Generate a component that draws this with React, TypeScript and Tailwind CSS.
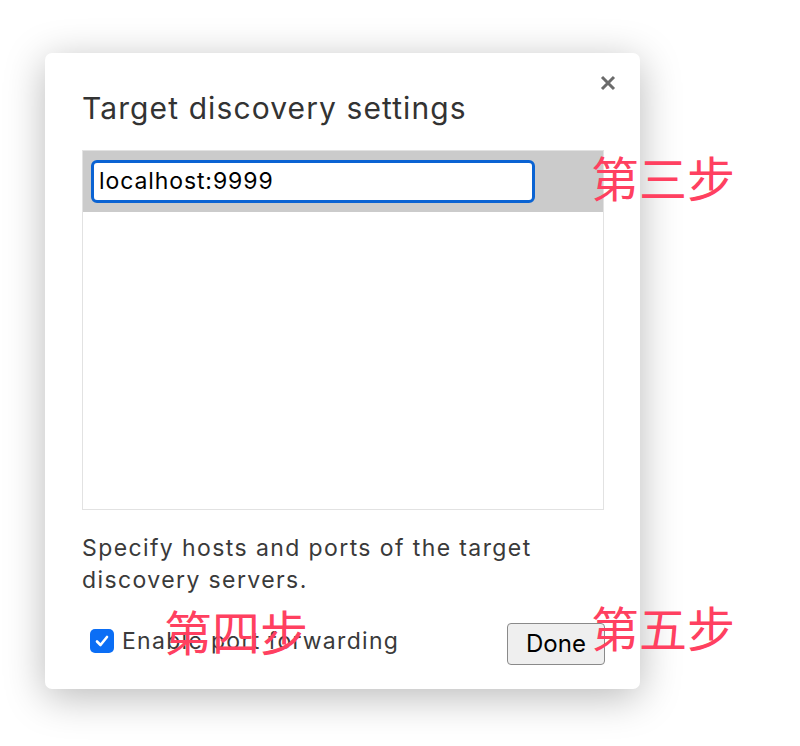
import React from "react";

const App = () => {
  return (
    <div
      className="relative h-[746px] w-[800px] overflow-hidden bg-white"
      style={{ fontFamily: 'Inter, "Liberation Sans", "Noto Sans CJK SC", sans-serif' }}
    >
      <div className="absolute left-[45px] top-[53px] flex h-[636px] w-[595px] flex-col rounded-[7px] bg-white px-[37px] pt-[36px] shadow-[0_8px_40px_rgba(0,0,0,0.28)]">
        <button className="absolute right-[20px] top-[18px] flex h-[24px] w-[24px] items-center justify-center">
          <svg width="16" height="16" viewBox="0 0 16 16">
            <path d="M2 2 L14 14 M14 2 L2 14" stroke="#6b6b6b" strokeWidth="3" strokeLinecap="butt" />
          </svg>
        </button>
        <h2 className="text-[30px] leading-[38px] tracking-[1.1px] text-[#333333]">Target discovery settings</h2>
        <div className="mt-[23px] h-[360px] w-[522px] border border-[#e2e2e2]">
          <div className="flex h-[61px] items-center bg-[#cbcbcb] px-[8px]">
            <div className="flex h-[43px] w-[444px] items-center rounded-[6px] border-[3px] border-[#0a63d3] bg-white px-[5px] text-[23px] tracking-[0.9px] text-black">
              localhost:9999
            </div>
          </div>
        </div>
        <p className="mt-[22px] w-[480px] text-[23px] leading-[32px] tracking-[1.4px] text-[#3a3a3a]">
          Specify hosts and ports of the target discovery servers.
        </p>
        <div className="mt-[21px] flex items-center justify-between">
          <label className="ml-[8px] flex items-center gap-[8px] text-[23px] tracking-[1.3px] text-[#3a3a3a]">
            <span className="flex h-[24px] w-[24px] items-center justify-center rounded-[5px] bg-[#0b6ef5]">
              <svg width="16" height="16" viewBox="0 0 16 16">
                <path d="M3 8.5 L6.5 12 L13 4" stroke="white" strokeWidth="2.6" fill="none" strokeLinecap="round" strokeLinejoin="round" />
              </svg>
            </span>
            Enable port forwarding
          </label>
          <button className="mr-[-2px] mt-[6px] h-[42px] w-[98px] rounded-[4px] border border-[#8a8a8a] bg-[#efefef] text-[24px] text-black">
            Done
          </button>
        </div>
      </div>
      <div className="absolute left-[591px] top-[150px] text-[48px] leading-[60px] text-[#ff4060]">第三步</div>
      <div className="absolute left-[164px] top-[604px] text-[48px] leading-[60px] text-[#ff4060]">第四步</div>
      <div className="absolute left-[591px] top-[600px] text-[48px] leading-[60px] text-[#ff4060]">第五步</div>
    </div>
  );
};

export default App;
